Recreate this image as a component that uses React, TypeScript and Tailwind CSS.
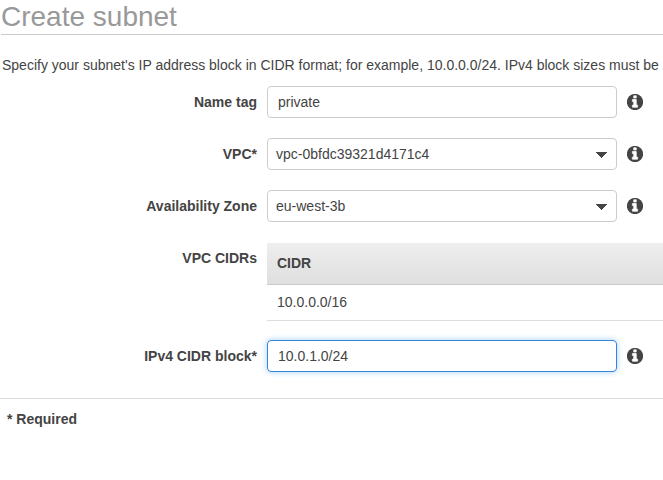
import React from "react";

function Info() {
  return (
    <svg className="ml-[10px] h-4 w-4 shrink-0" viewBox="128 128 1536 1536" aria-label="Info">
      <circle cx="896" cy="896" r="780" fill="#444" />
      <path
        fill="#fff"
        stroke="#fff"
        strokeWidth="60"
        d="M1152 1376v-160q0-14-9-23t-23-9h-96v-512q0-14-9-23t-23-9h-320q-14 0-23 9t-9 23v160q0 14 9 23t23 9h96v320h-96q-14 0-23 9t-9 23v160q0 14 9 23t23 9h448q14 0 23-9t9-23zm-128-896v-160q0-14-9-23t-23-9h-192q-14 0-23 9t-9 23v160q0 14 9 23t23 9h192q14 0 23-9t9-23z"
      />
    </svg>
  );
}

function Label({ children }: { children: React.ReactNode }) {
  return <div className="w-[257px] shrink-0 text-right font-bold leading-8">{children}</div>;
}

function SelectField({ label, value }: { label: string; value: string }) {
  return (
    <div className="flex h-8 items-center">
      <Label>{label}</Label>
      <div className="ml-[10px] flex h-8 w-[350px] items-center justify-between rounded-[4px] border border-[#ccc] pr-[9px] pl-2">
        <span>{value}</span>
        <svg className="mt-[2px] h-[6px] w-[11px]" viewBox="0 0 11 6" shapeRendering="crispEdges">
          <path d="M0 0h11v1h-1v1H9v1H8v1H7v1H6v1H5V5H4V4H3V3H2V2H1V1H0z" fill="#444" />
        </svg>
      </div>
      <Info />
    </div>
  );
}

export default function App() {
  return (
    <main className="h-[480px] w-[663px] overflow-hidden bg-white font-['Liberation_Sans',Arial,sans-serif] text-[14px] leading-5 text-[#444]">
      <h1 className="ml-px h-[35px] border-b border-[#ccc] pt-px text-[28px] leading-8 text-[#999]">Create subnet</h1>
      <p className="mt-5 h-[31px] pl-[2px] whitespace-nowrap">Specify your subnet's IP address block in CIDR format; for example, 10.0.0.0/24. IPv4 block sizes must be</p>
      <form className="flex flex-col gap-5">
        <div className="flex h-8 items-center">
          <Label>Name tag</Label>
          <input className="ml-[10px] h-8 w-[350px] rounded-[4px] border border-[#ccc] px-[10px] outline-none" defaultValue="private" />
          <Info />
        </div>
        <SelectField label="VPC*" value="vpc-0bfdc39321d4171c4" />
        <SelectField label="Availability Zone" value="eu-west-3b" />
        <div className="flex h-[78px] items-start">
          <Label>VPC CIDRs</Label>
          <div className="mt-px ml-[10px] w-[396px]">
            <div className="h-[42px] border-b border-[#ccc] bg-linear-to-b from-[#eee] to-[#dfdfdf] pl-[10px] font-bold leading-[41px]">CIDR</div>
            <div className="h-9 border-b border-[#ddd] pl-[10px] leading-[35px]">10.0.0.0/16</div>
          </div>
        </div>
        <div className="flex h-8 items-center">
          <Label>IPv4 CIDR block*</Label>
          <input className="ml-[10px] h-8 w-[350px] rounded-[4px] border border-[#2f86dc] px-[10px] shadow-[0_0_6px_#a5cff5] outline-none" defaultValue="10.0.1.0/24" />
          <Info />
        </div>
      </form>
      <footer className="mt-[26px] border-t border-[#ddd] pt-[10px] pl-[7px] font-bold">* Required</footer>
    </main>
  );
}
